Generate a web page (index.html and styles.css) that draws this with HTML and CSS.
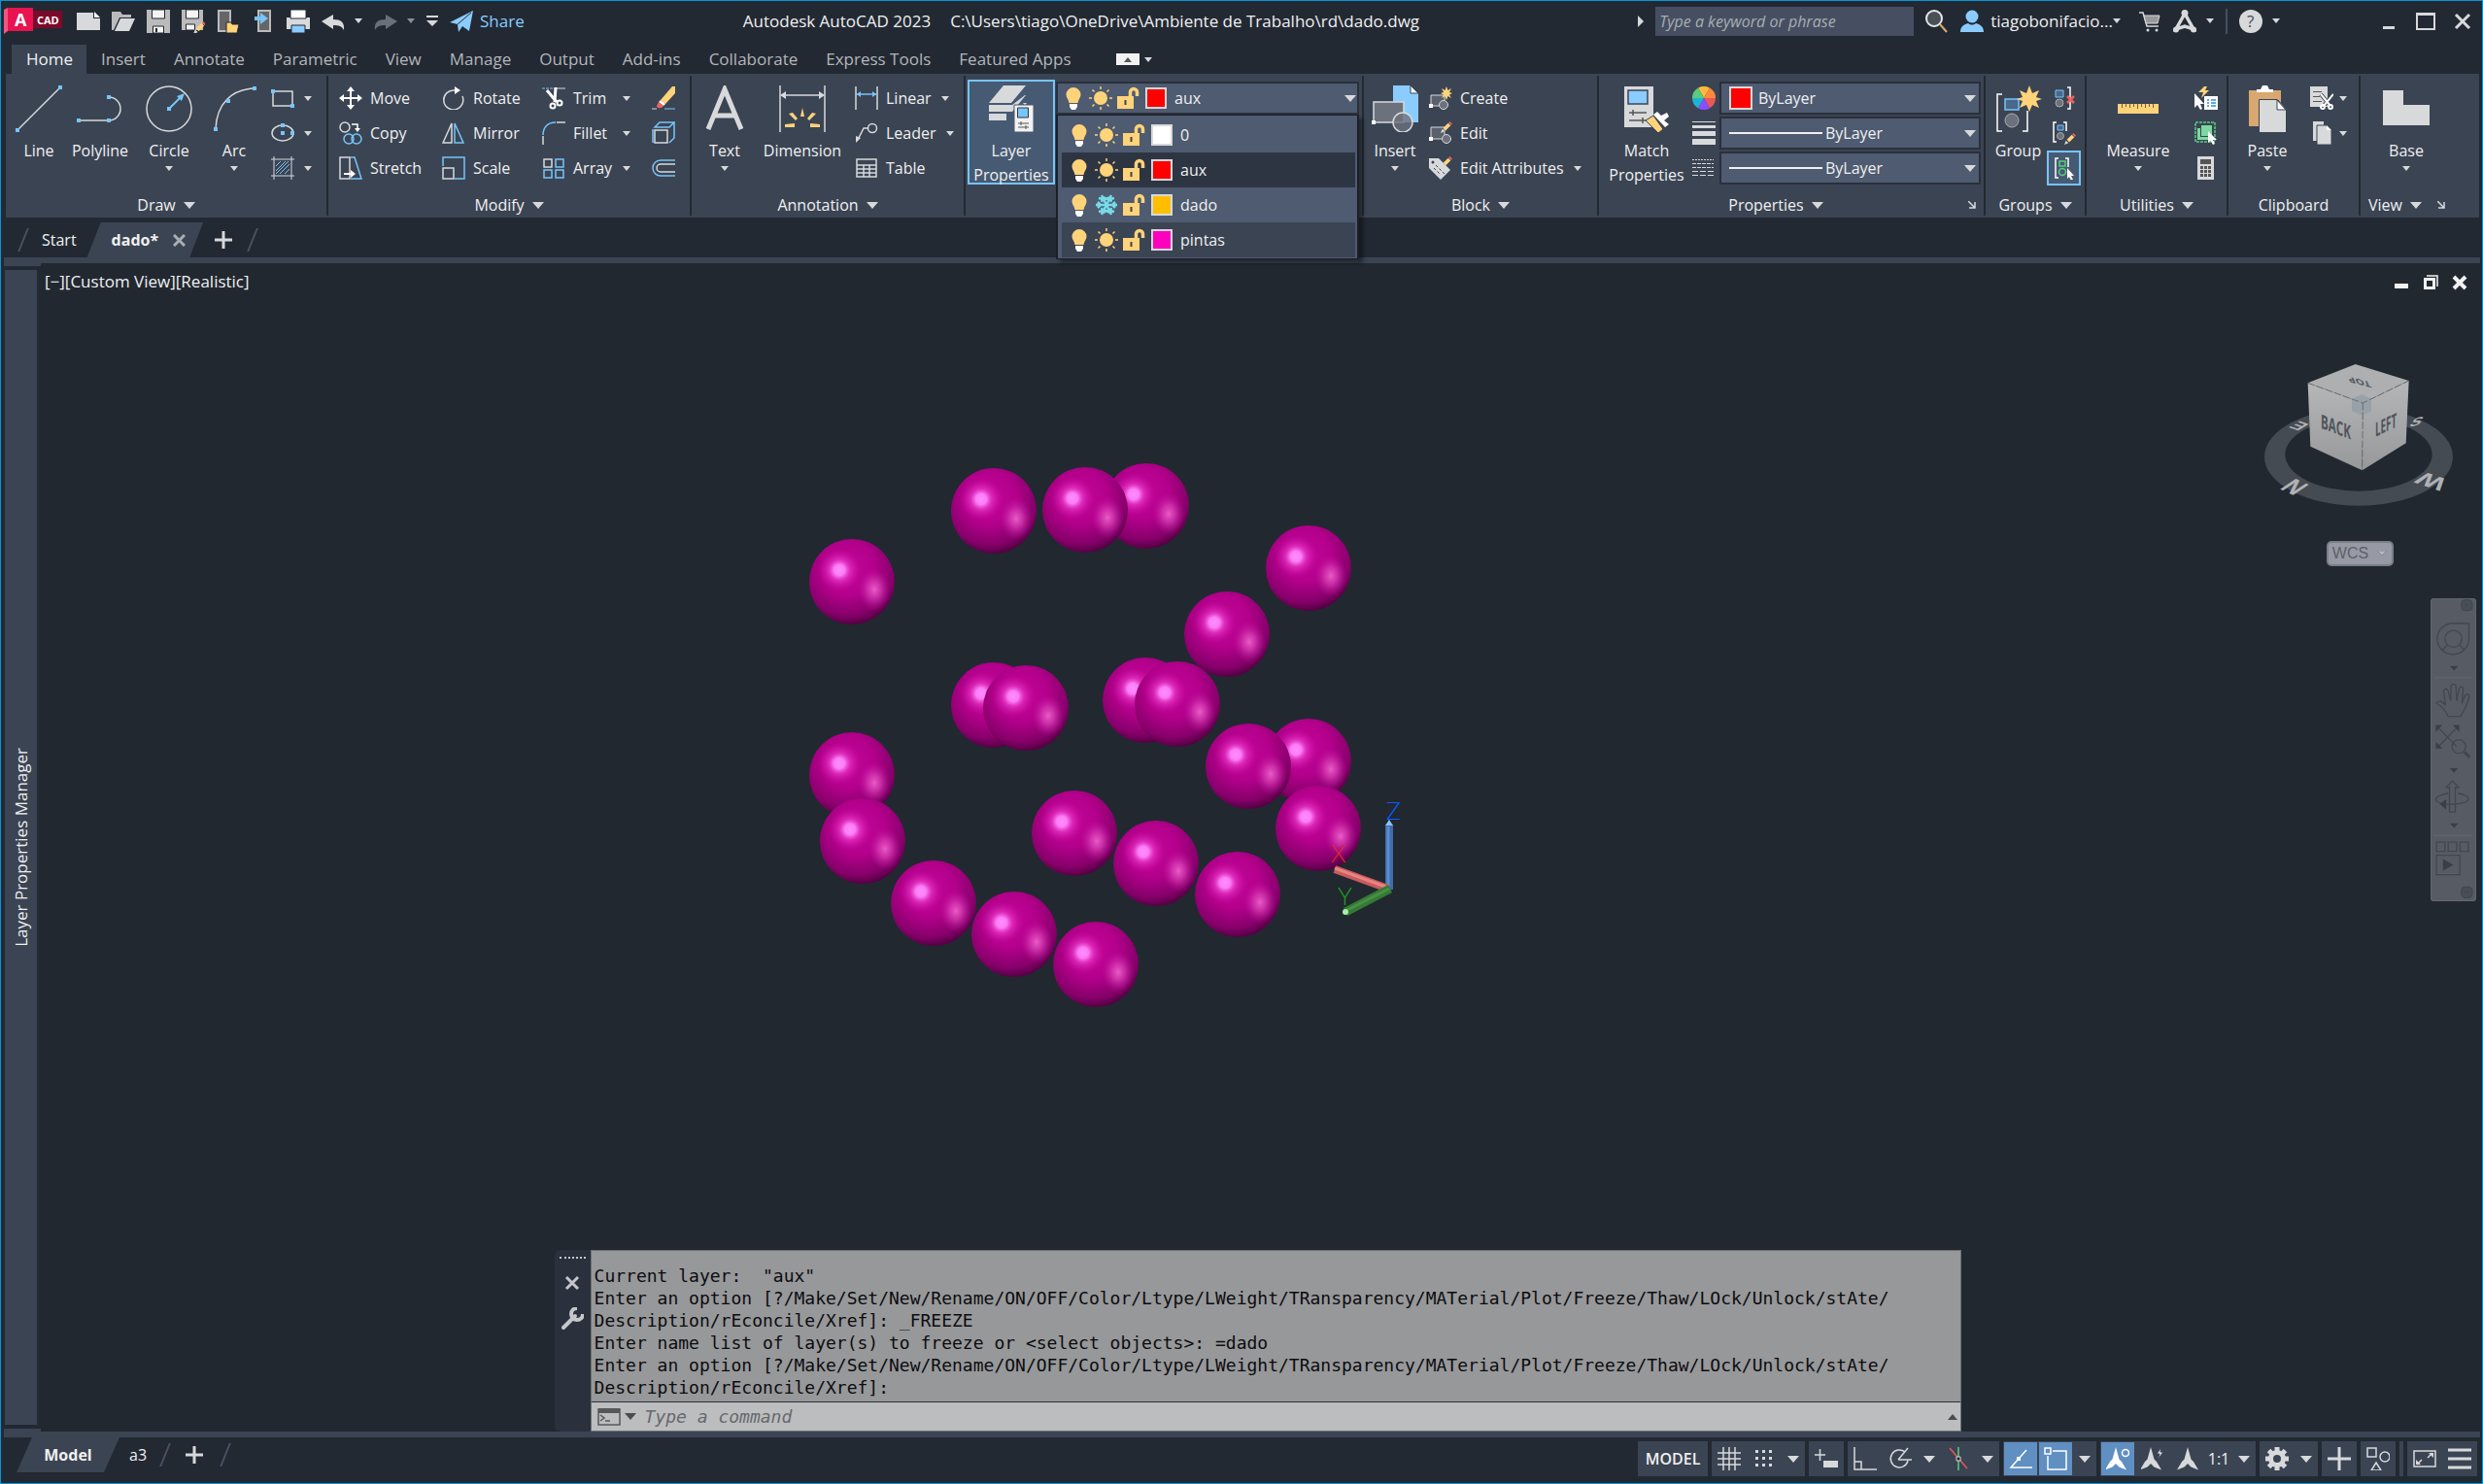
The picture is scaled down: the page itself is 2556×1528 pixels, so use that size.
FILE: index.html
```html
<!DOCTYPE html>
<html lang="en">
  <head>
    <meta charset="UTF-8" />
    <meta name="viewport" content="width=device-width, initial-scale=1.0" />
    <title>Autodesk AutoCAD 2023</title>
    <link rel="stylesheet" href="styles.css">
  </head>
  <body>
    <!-- Shared symbols -->
    <svg class="sprite" aria-hidden="true">
      <symbol id="bulb" viewBox="0 0 24 24">
        <path fill="#ffd37a" d="M12 1a7.500 7.500 0 0 1 7.500 7.500c0 3-2.500 5-3 8.500h-9c-.5-3.500-3-5.500-3-8.500A7.500 7.500 0 0 1 12 1z" />
        <path fill="#fff" d="M8 18h8v3l-2 3h-4l-2-3z" />
      </symbol>
      <symbol id="sun" viewBox="0 0 24 24">
        <circle cx="12" cy="12" r="7" fill="#ffd37a" />
        <path stroke="#ffd37a" stroke-width="1.500" d="M12 0v3M12 21v3M0 12h3M21 12h3M3.500 3.500l2 2M18.500 18.500l2 2M3.500 20.500l2-2M18.500 5.500l2-2" />
      </symbol>
      <symbol id="snow" viewBox="0 0 24 24">
        <path stroke="#76dbe8" stroke-width="2.500" fill="none" d="M12 12L7 2M12 12l5-10M12 12L7 22M12 12l5 10M1 12h22M4 5l4 1-1 3M20 5l-4 1 1 3M4 19l4-1-1-3M20 19l-4-1 1-3M3 9l3 3-3 3M21 9l-3 3 3 3M9 4l3 2 3-2M9 20l3-2 3 2" />
      </symbol>
      <symbol id="lock" viewBox="0 0 24 24">
        <path fill="#ffd37a" d="M1 10h17v13H1z" />
        <path fill="none" stroke="#ffd37a" stroke-width="3.500" d="M14.500 11V6a3.500 3.500 0 0 1 7 0v4" />
        <path stroke="#3b4453" stroke-width="2" d="M9.500 14v5" />
      </symbol>
      <symbol id="pencil" viewBox="0 0 14 14">
        <path fill="#ffd37a" d="M3 8l6-6 3 3-6 6z" />
        <path fill="#f06060" d="M9.500 1.500L11 0l3 3-1.500 1.500z" />
        <path fill="#d8d9db" d="M0 14l2-5 3 3z" />
      </symbol>
      <symbol id="compass" viewBox="0 0 24 24">
        <path fill="currentColor" d="M12 0l3.500 12.500L18 15l5 8.500-7.500-3L12 17l-3.500 3.500-7.500 3L6 15l2.500-2.500z" />
      </symbol>
      <radialGradient id="ball" cx="0.450" cy="0.350" r="0.680">
        <stop offset="0" stop-color="#c4069a" />
        <stop offset="0.450" stop-color="#b4008c" />
        <stop offset="0.800" stop-color="#86006a" />
        <stop offset="1" stop-color="#48003a" />
      </radialGradient>
      <radialGradient id="shine">
        <stop offset="0" stop-color="#ff8cff" />
        <stop offset="0.250" stop-color="#ff84fc" stop-opacity="0.950" />
        <stop offset="0.500" stop-color="#f040d0" stop-opacity="0.600" />
        <stop offset="1" stop-color="#d010a8" stop-opacity="0" />
      </radialGradient>
      <radialGradient id="glow">
        <stop offset="0" stop-color="#ea5cc8" />
        <stop offset="0.400" stop-color="#dc40b8" stop-opacity="0.700" />
        <stop offset="1" stop-color="#c010a0" stop-opacity="0" />
      </radialGradient>
      <symbol id="sphere" viewBox="-44 -44 88 88" overflow="visible">
        <circle r="44" fill="url(#ball)" />
        <ellipse cx="23" cy="8" rx="17" ry="22" fill="url(#glow)" />
        <circle cx="-13" cy="-12" r="22" fill="url(#shine)" />
      </symbol>
    </svg>

    <header class="titlebar">
      <div class="quick">
        <svg class="logo" viewBox="0 0 60 28">
          <path fill="#e81350" d="M4 0h26v24H4z" /><path fill="#f0567f" d="M0 2l4-2v24l-4 3z" />
          <path fill="#7c0a2a" d="M30 3h30v18H30z" />
          <text x="11" y="19" class="logo-a">A</text><text x="34" y="17" class="logo-cad">CAD</text>
        </svg>
        <svg class="ico" viewBox="0 0 24 24"><path fill="#d8d9db" d="M0 3h17v6h7v12H0z" /><path fill="#fff" d="M18 2l6 6h-6z" /></svg>
        <svg class="ico" viewBox="0 0 24 24"><path fill="#bbb" d="M0 2h9l2 3h9v3H8L2 21H0z" /><path fill="#d8d9db" d="M9 9h15l-6 13H3z" /></svg>
        <svg class="ico" viewBox="0 0 24 24"><path fill="#bbb" d="M0 0h24v24H0z" /><path fill="#f4f4f4" stroke="#222933" d="M5.500 0h13v9h-13zM6.500 17h11v7h-11z" /><path fill="#222933" d="M9 19h2v4H9z" /></svg>
        <svg class="ico" viewBox="0 0 24 24"><path fill="#bbb" d="M0 0h22v21H0z" /><path fill="#f4f4f4" stroke="#222933" d="M4.500 0h13v9h-13zM4.500 15h9v6h-9z" /><use href="#pencil" x="12" y="12" width="13" height="13" /></svg>
        <svg class="ico" viewBox="0 0 24 24"><path fill="#666" stroke="#bbb" stroke-width="2" d="M2 1h12v21H2z" /><path fill="#ffd37a" d="M10 13h5l1 2h7l-2 9H10z" stroke="#222933" /></svg>
        <svg class="ico" viewBox="0 0 24 24"><path fill="#666" stroke="#bbb" stroke-width="2" d="M7 1h12v21H7z" /><path fill="#76c5fb" d="M3 7h6V3l8 6-8 6v-4H3z" /></svg>
        <svg class="ico" viewBox="0 0 24 24"><path fill="#d8d9db" d="M0 8h24v12H0z" /><path fill="#fff" stroke="#222933" d="M4 0h16v9H4z" /><path fill="#8accff" stroke="#222933" d="M5 16h14v8H5z" /></svg>
        <div class="split">
          <svg class="ico" viewBox="0 0 24 24"><path fill="#d8d9db" d="M0 12l12-7v5c8 0 12 3 11 11-2-4-5-5-11-5v4z" /></svg>
          <i class="caret"></i>
        </div>
        <div class="split dim">
          <svg class="ico" viewBox="0 0 24 24"><path fill="#6a6f78" d="M24 12L12 5v5C4 10 0 13 1 21c2-4 5-5 11-5v4z" /></svg>
          <i class="caret"></i>
        </div>
        <svg width="12" height="12" viewBox="0 0 12 12"><path fill="#d8d9db" d="M0 0h12v2H0zM0 5h12l-6 6z" /></svg>
        <a class="share" href="#">
          <svg class="ico" viewBox="0 0 24 24"><path fill="#8accff" d="M0 13L24 1l-4 21-7-5-4 6-1-8z" /><path stroke="#222933" d="M8 15L22 3" /></svg>
          Share
        </a>
      </div>
      <div class="doc-title"><span>Autodesk AutoCAD 2023</span><span>C:\Users\tiago\OneDrive\Ambiente de Trabalho\rd\dado.dwg</span></div>
      <div class="account">
        <svg width="6" height="12" viewBox="0 0 6 12"><path fill="#d8d9db" d="M0 0l6 6-6 6z" /></svg>
        <input class="search" type="text" placeholder="Type a keyword or phrase" aria-label="Search" />
        <svg class="ico" viewBox="0 0 24 24"><circle cx="9" cy="9" r="8" fill="#4a5058" stroke="#e8e8e8" stroke-width="2" /><path stroke="#d8a870" stroke-width="2" d="M15 15l7 8" /></svg>
        <button class="user">
          <svg class="ico" viewBox="0 0 24 24"><circle cx="12" cy="7" r="6.500" fill="#8accff" /><path fill="#8accff" d="M0 23c0-6 4-8 8-9 3 2 5 2 8 0 4 1 8 3 8 9z" /></svg>
          <span>tiagobonifacio...</span><i class="caret"></i>
        </button>
        <svg class="ico" viewBox="0 0 24 24"><path fill="none" stroke="#d8d9db" stroke-width="1.500" d="M1 3h4l4 14h12" /><path fill="#999" stroke="#d8d9db" d="M6 6h16l-2 8H8z" /><circle cx="10" cy="21" r="1.500" fill="#d8d9db" /><circle cx="19" cy="21" r="1.500" fill="#d8d9db" /></svg>
        <div class="split">
          <svg class="ico" viewBox="0 0 24 24"><path fill="none" stroke="#d8d9db" stroke-width="3.500" d="M12 4L3 20l9-3 9 3z" /><circle cx="12" cy="3.500" r="3.500" fill="#d8d9db" /><circle cx="3" cy="20.500" r="3" fill="#d8d9db" /><circle cx="21" cy="20.500" r="3" fill="#d8d9db" /></svg>
          <i class="caret"></i>
        </div>
        <i class="bar"></i>
        <div class="split">
          <svg class="ico" viewBox="0 0 24 24"><circle cx="12" cy="12" r="12" fill="#d8d9db" /><text x="8" y="18" class="help">?</text></svg>
          <i class="caret"></i>
        </div>
        <div class="win">
          <button aria-label="Minimize"><svg viewBox="0 0 20 20"><path stroke="#d8d9db" stroke-width="3" d="M4 16.500h12" /></svg></button>
          <button aria-label="Maximize"><svg viewBox="0 0 20 20"><path fill="none" stroke="#d8d9db" stroke-width="2" d="M1 2h18v16H1z" /><path stroke="#d8d9db" stroke-width="3" d="M1 2.500h18" /></svg></button>
          <button aria-label="Close"><svg viewBox="0 0 20 20"><path stroke="#d8d9db" stroke-width="3" d="M3 3l14 14M17 3L3 17" /></svg></button>
        </div>
      </div>
    </header>

    <nav class="tabs">
      <a class="active" href="#">Home</a>
      <a href="#">Insert</a>
      <a href="#">Annotate</a>
      <a href="#">Parametric</a>
      <a href="#">View</a>
      <a href="#">Manage</a>
      <a href="#">Output</a>
      <a href="#">Add-ins</a>
      <a href="#">Collaborate</a>
      <a href="#">Express Tools</a>
      <a href="#">Featured Apps</a>
      <button class="collapse" aria-label="Minimize ribbon"><svg viewBox="0 0 24 12"><path fill="#f2f2f2" d="M0 0h24v12H0z" /><path fill="#555" d="M12 4l4 5H8z" /></svg></button>
      <i class="caret"></i>
    </nav>

    <section class="ribbon">
      <div class="panel draw">
        <div class="tools">
          <button class="big">
            <svg viewBox="0 0 48 48"><path stroke="#d8d9db" stroke-width="1.500" d="M2 46L46 2" /><path fill="#76c5fb" d="M0 44h4v4H0zM44 0h4v4h-4z" /></svg>
            <span>Line</span>
          </button>
          <button class="big">
            <svg viewBox="0 0 48 48"><path fill="none" stroke="#d8d9db" stroke-width="1.500" d="M2 36h31a12 12 0 0 0 0-24" /><path fill="#76c5fb" d="M0 34h4v4H0zM31 34h4v4h-4zM31 10h4v4h-4z" /></svg>
            <span>Polyline</span>
          </button>
          <button class="big">
            <svg viewBox="0 0 48 48"><circle cx="24" cy="24" r="23" fill="none" stroke="#d8d9db" stroke-width="1.500" /><path stroke="#76c5fb" stroke-width="2" d="M24 24l13-13" /><path fill="#76c5fb" d="M22 22h4v4h-4zM40 8l-3 8-5-5z" /></svg>
            <span>Circle</span><i class="caret"></i>
          </button>
          <button class="big">
            <svg viewBox="0 0 48 48"><path fill="none" stroke="#d8d9db" stroke-width="1.500" d="M5 45C6 18 22 4 45 3" /><path fill="#76c5fb" d="M3 43h4v4H3zM16 14h4v4h-4zM43 1h4v4h-4z" /></svg>
            <span>Arc</span><i class="caret"></i>
          </button>
          <div class="rows">
            <button class="row"><svg viewBox="0 0 24 24"><path fill="none" stroke="#d8d9db" stroke-width="1.500" d="M2 5h20v15H2z" /><path fill="#76c5fb" d="M0 3h4v4H0zM20 18h4v4h-4z" /></svg><i class="caret"></i></button>
            <button class="row"><svg viewBox="0 0 24 24"><ellipse cx="12" cy="12" rx="11" ry="8" fill="none" stroke="#d8d9db" stroke-width="1.500" /><path fill="#76c5fb" d="M10 10h4v4h-4zM10 2h4v4h-4zM20 10h4v4h-4z" /></svg><i class="caret"></i></button>
            <button class="row"><svg viewBox="0 0 24 24"><path fill="none" stroke="#d8d9db" d="M0 3h24M0 20h24M3 0v24M21 0v24" /><path stroke="#76c5fb" d="M5 10l5-5M5 15L15 5M5 18L18 5M9 18L19 8M14 18l5-5" /></svg><i class="caret"></i></button>
          </div>
        </div>
        <h2>Draw <i class="drop"></i></h2>
      </div>

      <div class="panel modify">
        <div class="tools">
          <div class="rows">
            <button class="row"><svg viewBox="0 0 24 24"><path stroke="#fff" stroke-width="2" d="M12 3v18M3 12h18" /><path fill="#fff" d="M12 0l4 5H8zM12 24l-4-5h8zM0 12l5-4v8zM24 12l-5 4V8z" /></svg><span>Move</span></button>
            <button class="row"><svg viewBox="0 0 24 24"><g fill="none" stroke-width="1.500"><circle cx="6" cy="6" r="5" stroke="#d8d9db" /><circle cx="10" cy="18" r="5" stroke="#76c5fb" /><circle cx="18" cy="18" r="5" stroke="#76c5fb" /><path stroke="#fff" d="M13 3h6v5" /></g><path fill="#fff" d="M16 7h6l-3 4z" /></svg><span>Copy</span></button>
            <button class="row"><svg viewBox="0 0 24 24"><path fill="none" stroke="#d8d9db" stroke-width="1.500" d="M1 1h10v22H1z" /><path fill="none" stroke="#76c5fb" stroke-width="1.500" d="M12 1h4l7 22H12" /><path stroke="#fff" stroke-width="2" d="M5 18h8" /><path fill="#fff" d="M12 14l5 4-5 4z" /></svg><span>Stretch</span></button>
          </div>
          <div class="rows">
            <button class="row"><svg viewBox="0 0 24 24"><path fill="none" stroke="#d8d9db" stroke-width="1.500" d="M13 4a10 10 0 1 0 8 6" /><path fill="#fff" d="M13 0l6 4-6 4z" /></svg><span>Rotate</span></button>
            <button class="row"><svg viewBox="0 0 24 24"><path fill="none" stroke="#d8d9db" stroke-width="1.500" d="M10 2v20H1z" /><path fill="none" stroke="#76c5fb" stroke-width="1.500" d="M13 2v20h9z" /></svg><span>Mirror</span></button>
            <button class="row"><svg viewBox="0 0 24 24"><path fill="none" stroke="#76c5fb" stroke-width="1.500" d="M1 10V1h22v22H13" /><path fill="none" stroke="#d8d9db" stroke-width="1.500" d="M1 12h11v11H1z" /></svg><span>Scale</span></button>
          </div>
          <div class="rows spread">
            <button class="row"><svg viewBox="0 0 24 24"><path stroke="#76c5fb" stroke-dasharray="3 1" d="M0 2h13" /><path stroke="#d8d9db" d="M15 2h9" /><path stroke="#fff" stroke-width="3" d="M5 4l10 12M14 1l-1 15" /><g fill="none" stroke="#fff" stroke-width="2"><circle cx="11" cy="20" r="2.500" /><circle cx="18" cy="17" r="2.500" /></g></svg><span>Trim</span><i class="caret"></i></button>
            <button class="row"><svg viewBox="0 0 24 24"><path fill="none" stroke="#76c5fb" stroke-width="1.500" d="M1 14C1 6 6 1 14 1" /><path stroke="#d8d9db" stroke-width="1.500" d="M15 1h9M1 15v9" /></svg><span>Fillet</span><i class="caret"></i></button>
            <button class="row"><svg viewBox="0 0 24 24"><path fill="none" stroke="#d8d9db" stroke-width="1.500" d="M2 3h8v8H2z" /><path fill="none" stroke="#76c5fb" stroke-width="1.500" d="M14 3h8v8h-8zM2 14h8v8H2zM14 14h8v8h-8z" /></svg><span>Array</span><i class="caret"></i></button>
          </div>
          <div class="rows">
            <button class="row" aria-label="Erase"><svg viewBox="0 0 24 24"><path fill="#ffd37a" d="M24 0v7L14 18l-5-4L21 0z" /><path fill="#fff" d="M9 14l5 4-2 2-5-4z" /><path fill="#f06060" d="M7 16l5 4c-2 3-7 3-7 0z" /><path stroke="#76c5fb" d="M13 23h11" /><path stroke="#d8d9db" d="M0 23h5" /></svg></button>
            <button class="row" aria-label="Explode"><svg viewBox="0 0 24 24"><path fill="none" stroke="#76c5fb" stroke-width="1.500" d="M1 8v14M3 6l5-5h15l-5 5zM18 22l5-5V1" /><path fill="none" stroke="#d8d9db" stroke-width="1.500" d="M3 9h13v13H3z" /></svg></button>
            <button class="row" aria-label="Offset"><svg viewBox="0 0 24 24"><path fill="none" stroke="#76c5fb" stroke-width="1.500" d="M24 4H9a7.500 7.500 0 0 0 0 16h15" /><path fill="none" stroke="#d8d9db" stroke-width="1.500" d="M24 8H9a4 4 0 0 0 0 8h15" /></svg></button>
          </div>
        </div>
        <h2>Modify <i class="drop"></i></h2>
      </div>

      <div class="panel annotation">
        <div class="tools">
          <button class="big">
            <svg viewBox="0 0 48 48"><path fill="none" stroke="#d8d9db" stroke-width="5" d="M7 45L24 4l17 41M13 31h22" /></svg>
            <span>Text</span><i class="caret"></i>
          </button>
          <button class="big">
            <svg viewBox="0 0 48 48"><path stroke="#d8d9db" stroke-width="1.500" d="M1 0v48M47 0v48M2 10h44" /><path fill="#d8d9db" d="M1 10l6-4v8zM47 10l-6-4v8z" /><path fill="#ffd37a" d="M22 32l2-9 2 9zM17 36l-7-7 4-1 5 6zM31 36l7-7-4-1-5 6zM6 40l10-1v4H6zM42 40l-10-1v4h10z" /></svg>
            <span>Dimension</span>
          </button>
          <div class="rows">
            <button class="row"><svg viewBox="0 0 24 24"><path stroke="#d8d9db" stroke-width="1.500" d="M1 0v24M23 0v24" /><path stroke="#76c5fb" stroke-width="1.500" d="M2 8h20" /><path fill="#76c5fb" d="M2 8l4-3v6zM22 8l-4-3v6z" /></svg><span>Linear</span><i class="caret"></i></button>
            <button class="row"><svg viewBox="0 0 24 24"><circle cx="18" cy="7" r="4.500" fill="none" stroke="#d8d9db" stroke-width="1.500" /><path fill="none" stroke="#d8d9db" stroke-width="1.500" d="M13 7H9L3 19" /><path fill="#d8d9db" d="M1 22V15l5 2z" /></svg><span>Leader</span><i class="caret"></i></button>
            <button class="row"><svg viewBox="0 0 24 24"><path fill="none" stroke="#d8d9db" stroke-width="1.500" d="M2 3h20v18H2zM2 9h20M2 13h20M2 17h20M9 9v12M15 9v12" /></svg><span>Table</span></button>
          </div>
        </div>
        <h2>Annotation <i class="drop"></i></h2>
      </div>

      <div class="panel layers">
        <div class="tools">
          <button class="big on">
            <svg viewBox="0 0 48 48"><g fill="#d8d9db"><path d="M16 0h23L24 18H1z" /><path d="M6 20H1l0 7h24L39 10l-1 0-13 10zM6 29H1v7h18v-7zM36 18h4l-2 3z" /></g><path fill="#f2f2f2" stroke="#465a73" d="M27 20h20v28H27z" /><path fill="#76c5fb" stroke="#333" d="M30.500 23h11v10h-11z" /><path stroke="#555" d="M31 39h11M31 43h11M34 37v4M39 41v4" /></svg>
            <span>Layer<br>Properties</span>
          </button>
          <div class="layer-box">
            <div class="combo">
              <svg class="li"><use href="#bulb" /></svg>
              <svg class="li"><use href="#sun" /></svg>
              <svg class="li"><use href="#lock" /></svg>
              <i class="swatch red"></i>
              <select aria-label="Layer"><option>aux</option></select>
              <i class="drop"></i>
            </div>
            <ul class="layer-list">
              <li><svg class="li"><use href="#bulb" /></svg><svg class="li"><use href="#sun" /></svg><svg class="li"><use href="#lock" /></svg><i class="swatch white"></i><span>0</span></li>
              <li class="current"><svg class="li"><use href="#bulb" /></svg><svg class="li"><use href="#sun" /></svg><svg class="li"><use href="#lock" /></svg><i class="swatch red"></i><span>aux</span></li>
              <li><svg class="li"><use href="#bulb" /></svg><svg class="li"><use href="#snow" /></svg><svg class="li"><use href="#lock" /></svg><i class="swatch amber"></i><span>dado</span></li>
              <li class="plain"><svg class="li"><use href="#bulb" /></svg><svg class="li"><use href="#sun" /></svg><svg class="li"><use href="#lock" /></svg><i class="swatch pink"></i><span>pintas</span></li>
            </ul>
          </div>
        </div>
      </div>

      <div class="panel block">
        <div class="tools">
          <button class="big">
            <svg viewBox="0 0 48 48"><path fill="#8accff" d="M22 0h18l8 8v30H22z" /><path fill="#fff" stroke="#3b4453" d="M40 0v8h8z" /><path fill="#6b727d" stroke="#d8d9db" stroke-width="1.500" d="M2 17h31v21H2z" /><circle cx="32" cy="38" r="10" fill="#6b727d" fill-opacity=".8" stroke="#d8d9db" stroke-width="1.500" /><path fill="#fff" d="M0 36h4v4H0z" /></svg>
            <span>Insert</span><i class="caret"></i>
          </button>
          <div class="rows">
            <button class="row"><svg viewBox="0 0 24 24"><path fill="#5a616d" stroke="#d8d9db" d="M2 9h14v11H2z" /><circle cx="15" cy="19" r="4.500" fill="#6b727d" stroke="#d8d9db" /><path fill="#fff" d="M0 18h4v4H0z" /><path fill="#ffd37a" d="M18 0l1.500 4L23 2l-2 4 3 1-3 1.500L23 12l-3.500-2L18 14l-1.500-4-3.500 2 2-3.500L12 7l3-1-2-4 3.500 2z" /></svg><span>Create</span></button>
            <button class="row"><svg viewBox="0 0 24 24"><path fill="#5a616d" stroke="#d8d9db" d="M2 6h14v12H2z" /><circle cx="18" cy="18" r="4.500" fill="#6b727d" stroke="#d8d9db" /><path fill="#fff" d="M0 16h4v4H0z" /><use href="#pencil" x="12" width="12" height="12" /></svg><span>Edit</span></button>
            <button class="row"><svg viewBox="0 0 24 24"><path fill="#d8d9db" d="M0 2h10l12 12-10 10L0 12z" /><circle cx="4" cy="6" r="1.500" fill="#3b4453" /><path stroke="#3b4453" stroke-dasharray="3 2" d="M7 9l9 9M5 12l7 7" /><use href="#pencil" x="12" width="12" height="12" /></svg><span>Edit Attributes</span><i class="caret"></i></button>
          </div>
        </div>
        <h2>Block <i class="drop"></i></h2>
      </div>

      <div class="panel properties">
        <div class="tools">
          <button class="big">
            <svg viewBox="0 0 48 48"><path fill="#d8d9db" d="M1 1h30v42H1z" /><path fill="#8accff" stroke="#3b4453" stroke-width="1.500" d="M5 5h20v14H5z" /><path stroke="#555" stroke-width="1.500" d="M6 28h18M6 36h18M10 25v6M20 33v6" /><path fill="#ffd37a" stroke="#3b4453" d="M23 36l8-5 10 14-5 4z" /><path fill="#fff" d="M31 30l4-3 4 4 6-3 2 4-5 4 5 4-4 3z" /></svg>
            <span>Match<br>Properties</span>
          </button>
          <div class="props">
            <svg class="pi" viewBox="0 0 24 24"><path fill="#ffb93c" d="M12 12L6 1.600a12 12 0 0 1 12 0z" /><path fill="#ff8a3d" d="M12 12l6-10.400A12 12 0 0 1 24 12z" /><path fill="#e85858" d="M12 12h12a12 12 0 0 1-6 10.400z" /><path fill="#8a4dff" d="M12 12l6 10.400a12 12 0 0 1-12 0z" /><path fill="#1eb4d0" d="M12 12L6 22.400A12 12 0 0 1 0 12z" /><path fill="#58cc80" d="M12 12H0A12 12 0 0 1 6 1.600z" /></svg>
            <div class="combo"><i class="swatch wide red"></i><select aria-label="Object color"><option>ByLayer</option></select><i class="drop"></i></div>
            <svg class="pi" viewBox="0 0 24 24"><path fill="#d8d9db" d="M0 0h24v1H0zM0 4h24v3H0zM0 10h24v5H0zM0 18h24v6H0z" /></svg>
            <div class="combo"><i class="stroke"></i><select aria-label="Lineweight"><option>ByLayer</option></select><i class="drop"></i></div>
            <svg class="pi" viewBox="0 0 24 24"><path stroke="#d8d9db" stroke-dasharray="2 1" d="M0 3.500h22" /><path stroke="#d8d9db" stroke-dasharray="4 1" d="M0 7.500h22M0 11.500h22" /><path stroke="#d8d9db" stroke-dasharray="6 2" d="M0 15.500h24M0 19.500h24" /></svg>
            <div class="combo"><i class="stroke"></i><select aria-label="Linetype"><option>ByLayer</option></select><i class="drop"></i></div>
          </div>
        </div>
        <h2><span>Properties <i class="drop"></i></span><svg class="launch" viewBox="0 0 8 8"><path fill="none" stroke="#d8d9db" stroke-width="1.500" d="M0 0l7 7M7 1v6H1" /></svg></h2>
      </div>

      <div class="panel groups">
        <div class="tools">
          <button class="big">
            <svg viewBox="0 0 48 48"><path fill="none" stroke="#fff" stroke-width="1.500" d="M7 9H2v38h5M28 47h5V26" /><path fill="#4b678a" stroke="#76c5fb" stroke-width="1.500" d="M10 14h14v11H10z" /><circle cx="17" cy="36" r="7" fill="#6b727d" stroke="#aaa" /><path fill="#ffd37a" d="M35 0l3 8 7-3-3 7 6 2-6 2 3 7-7-3-3 7-3-7-7 3 3-7-6-2 6-2-3-7 7 3z" /></svg>
            <span>Group</span>
          </button>
          <div class="rows">
            <button class="row" aria-label="Ungroup"><svg viewBox="0 0 24 24"><path fill="none" stroke="#fff" stroke-width="1.500" d="M15 1h3v22h-3" /><path fill="#4b678a" stroke="#76c5fb" d="M3 4h8v7H3z" /><circle cx="7" cy="17" r="4" fill="#6b727d" stroke="#aaa" /><path stroke="#f06060" stroke-width="2.500" d="M15 10l7 7M22 10l-7 7" /></svg></button>
            <button class="row" aria-label="Group edit"><svg viewBox="0 0 24 24"><path fill="none" stroke="#fff" stroke-width="1.500" d="M4 1H1v20h3M11 1h3v9" /><path fill="#4b678a" stroke="#76c5fb" d="M5 4h6v5H5z" /><circle cx="8" cy="15" r="3.500" fill="#6b727d" stroke="#aaa" /><use href="#pencil" x="12" y="12" width="12" height="12" /></svg></button>
            <button class="row on" aria-label="Group selection"><svg viewBox="0 0 24 24"><path fill="none" stroke="#fff" stroke-width="1.500" d="M6 2H3v20h3M13 2h3v9" /><path fill="none" stroke="#58cc80" stroke-width="1.500" d="M7 5h6v5H7z" /><circle cx="10" cy="16" r="3.500" fill="none" stroke="#58cc80" stroke-width="1.500" /><path fill="#fff" d="M15 12v11l2-2 2 4 2-1-2-4h3z" /></svg></button>
          </div>
        </div>
        <h2>Groups <i class="drop"></i></h2>
      </div>

      <div class="panel utilities">
        <div class="tools">
          <button class="big">
            <svg viewBox="0 0 48 48"><path fill="#ffd37a" d="M3 19h42v10H3z" /><path stroke="#7a6030" d="M7.500 19v4M11.500 19v3M15.500 19v4M19.500 19v3M23.500 19v5M27.500 19v3M31.500 19v4M35.500 19v3M39.500 19v4" /></svg>
            <span>Measure</span><i class="caret"></i>
          </button>
          <div class="rows">
            <button class="row" aria-label="Quick select"><svg viewBox="0 0 24 24"><path fill="#ffd37a" d="M10 0h3l-2 4h4l-8 8 2-6H4z" /><path fill="#fff" d="M0 7v15l3-3 3 5 2-1-2-5h4zM10 10h14v14H10z" /><path stroke="#2a8fe0" stroke-width="1.500" d="M13 14h2M13 17h2M13 20h2M17 14h5M17 17h5M17 20h5" /></svg></button>
            <button class="row" aria-label="Select all"><svg viewBox="0 0 24 24"><path fill="none" stroke="#58cc80" stroke-width="1.500" stroke-dasharray="3 1" d="M1 1h20v20H1z" /><path fill="#7dd8a0" d="M7 4h11v11H7zM3 7h3v9h10v3H3z" /><path fill="#fff" d="M14 10v12l2.500-2 2.500 4 2-1-2-4h4z" /></svg></button>
            <button class="row" aria-label="Quick calculator"><svg viewBox="0 0 24 24"><path fill="#d8d9db" d="M3 0h17v24H3z" /><path fill="#555" d="M6 3h11v5H6zM6 10h3v3H6zM10 10h3v3h-3zM14 10h3v3h-3zM6 14h3v3H6zM10 14h3v3h-3zM14 14h3v3h-3zM6 18h3v3H6zM10 18h3v3h-3zM14 18h3v3h-3z" /></svg></button>
          </div>
        </div>
        <h2>Utilities <i class="drop"></i></h2>
      </div>

      <div class="panel clipboard">
        <div class="tools">
          <button class="big">
            <svg viewBox="0 0 48 48"><path fill="#d8a870" d="M5 5h33v37H5z" /><path fill="#fff" d="M13 7V4h4l2-4h5l2 4h4v3z" /><path fill="#d8d9db" stroke="#3b4453" d="M15.500 14.500h19l9 10v24h-28z" /><path fill="#fff" stroke="#3b4453" d="M34 15v10h9z" /></svg>
            <span>Paste</span><i class="caret"></i>
          </button>
          <div class="rows">
            <button class="row" aria-label="Cut"><svg viewBox="0 0 24 24"><path fill="#d8d9db" d="M0 0h18v21H0z" /><path stroke="#555" d="M3 5.500h9M3 10.500h7M3 15.500h9" /><path stroke="#3b4453" stroke-width="4" d="M11 8l10 12M24 8L14 20" /><path stroke="#fff" stroke-width="2" d="M11 8l10 12M24 8L14 20" /><g fill="none" stroke="#fff" stroke-width="2"><circle cx="13" cy="21" r="2" /><circle cx="21" cy="21" r="2" /></g></svg><i class="caret"></i></button>
            <button class="row" aria-label="Copy clip"><svg viewBox="0 0 24 24"><path fill="#d8d9db" d="M3 0h11v20H3z" /><path fill="#d8d9db" stroke="#3b4453" d="M7 4h10l5 5v15H7z" /><path fill="#fff" d="M17 4l5 5h-5z" /></svg><i class="caret"></i></button>
          </div>
        </div>
        <h2>Clipboard</h2>
      </div>

      <div class="panel view">
        <div class="tools">
          <button class="big">
            <svg viewBox="0 0 48 48"><path fill="#d8d9db" d="M0 5h21v15h27v21H0z" /></svg>
            <span>Base</span><i class="caret"></i>
          </button>
        </div>
        <h2>View <i class="drop"></i><svg class="launch" viewBox="0 0 8 8"><path fill="none" stroke="#d8d9db" stroke-width="1.500" d="M0 0l7 7M7 1v6H1" /></svg></h2>
      </div>
    </section>

    <nav class="files">
      <i class="slash"></i>
      <a href="#" class="start">Start</a>
      <a href="#" class="file active">dado* <svg width="13" height="13" viewBox="0 0 13 13"><path stroke="#a9adb4" stroke-width="3" d="M1 1l11 11M12 1L1 12" /></svg></a>
      <button class="plus" aria-label="New drawing"><svg viewBox="0 0 18 18"><path stroke="#d8d9db" stroke-width="3" d="M9 0v18M0 9h18" /></svg></button>
      <i class="slash"></i>
    </nav>

    <main class="work">
      <aside class="dock"><div class="palette"><span>Layer Properties Manager</span></div></aside>
      <section class="viewport">
        <svg class="scene">
          <!-- scene origin is near the top left corner of the spheres' bounding box -->
          <g transform="translate(794 201)">
            <use href="#sphere" x="300" y="5" width="88" height="88" />
            <use href="#sphere" x="143" y="10" width="88" height="88" />
            <use href="#sphere" x="237" y="9" width="88" height="88" />
            <use href="#sphere" x="-3" y="83" width="88" height="88" />
            <use href="#sphere" x="467" y="69" width="88" height="88" />
            <use href="#sphere" x="383" y="137" width="88" height="88" />
            <use href="#sphere" x="143" y="210" width="88" height="88" />
            <use href="#sphere" x="176" y="213" width="88" height="88" />
            <use href="#sphere" x="299" y="205" width="88" height="88" />
            <use href="#sphere" x="332" y="209" width="88" height="88" />
            <use href="#sphere" x="467" y="268" width="88" height="88" />
            <use href="#sphere" x="405" y="273" width="88" height="88" />
            <use href="#sphere" x="477" y="337" width="88" height="88" />
            <use href="#sphere" x="-3" y="282" width="88" height="88" />
            <use href="#sphere" x="8" y="350" width="88" height="88" />
            <use href="#sphere" x="226" y="342" width="88" height="88" />
            <use href="#sphere" x="310" y="373" width="88" height="88" />
            <use href="#sphere" x="394" y="405" width="88" height="88" />
            <use href="#sphere" x="81" y="414" width="88" height="88" />
            <use href="#sphere" x="164" y="446" width="88" height="88" />
            <use href="#sphere" x="248" y="477" width="88" height="88" />
            <!-- UCS axes -->
            <g fill="none" stroke-width="8">
              <path stroke="#416bab" d="M594 377v67" /><path stroke="#5c8ccb" stroke-width="3" d="M593 379v62" />
              <path stroke="#c85b5b" d="M538 423l55 20" /><path stroke="#e88383" stroke-width="3" d="M538 422l55 20" />
              <path stroke="#347a34" stroke-width="9" d="M595 443l-46 24" /><path stroke="#489048" stroke-width="3" d="M594 443l-45 23" />
            </g>
            <circle cx="549" cy="467" r="3" fill="#a8f0a8" /><path fill="#8cc4ff" d="M590 378l4-6 4 6z" />
            <text x="591" y="372" class="axis" fill="#0a5cff">Z</text>
            <text x="534" y="416" class="axis" fill="#e02828">X</text>
            <text x="541" y="460" class="axis" fill="#20a020">Y</text>
          </g>
        </svg>

        <div class="vp-head">
          <span>[−][Custom View][Realistic]</span>
          <div class="vp-win">
            <button aria-label="Minimize"><svg viewBox="0 0 16 16"><path fill="#f2f2f2" d="M1 9h14v5H1z" /></svg></button>
            <button aria-label="Restore"><svg viewBox="0 0 16 16"><path fill="none" stroke="#f2f2f2" stroke-width="1.500" d="M4 1h11v11" /><path fill="none" stroke="#f2f2f2" stroke-width="3" d="M2.500 4.500h9v9h-9z" /></svg></button>
            <button aria-label="Close"><svg viewBox="0 0 16 16"><path stroke="#f2f2f2" stroke-width="4" d="M2 2l12 12M14 2L2 14" /></svg></button>
          </div>
        </div>

        <div class="nav-tools">
          <svg class="cube" viewBox="60 40 600 450">
            <defs>
              <linearGradient id="face" x2="0" y2="1"><stop offset="0" stop-color="#b4b6b8" /><stop offset="1" stop-color="#97989a" /></linearGradient>
            </defs>
            <path fill="#454b53" fill-rule="evenodd" d="M66 332a291 151 0 1 0 582 0a291 151 0 1 0-582 0zM130 325a227 113 0 1 0 454 0a227 113 0 1 0-454 0z" />
            <g class="dir">
              <text transform="matrix(-1 -.35 -.9 .55 174 252)">E</text>
              <text transform="matrix(1 -.2 -.5 .75 510 240)">S</text>
            </g>
            <path fill="#adafb1" d="M347 46l165 51-142 69-170-62z" />
            <path fill="url(#face)" d="M200 104l170 62-2 208-160-74z" />
            <path fill="url(#face)" d="M512 97l-142 69-2 208 135-84z" />
            <path fill="#98a0a8" d="M336 153l31-13 29 13v38l-28 13-32-13z" />
            <path fill="none" stroke="#50555b" stroke-width="2" stroke-dasharray="22 7" d="M200 104l170 62 142-69M370 166l-2 208" />
            <g class="face">
              <text transform="matrix(.58 .22 0 1 240 243)">BACK</text>
              <text transform="matrix(.49 -.24 0 1 408 271)">LEFT</text>
              <text class="top" transform="matrix(-.95 -.25 -.3 -.7 390 101)">TOP</text>
            </g>
            <g class="dir">
              <text transform="matrix(1.300 .6 -1.350 .9 110 430)">N</text>
              <text transform="matrix(-1.650 -.55 .8 -.95 636 404)">W</text>
            </g>
          </svg>
          <button class="wcs">WCS <svg width="12" height="6" viewBox="0 0 12 6"><path fill="#b5b7c2" stroke="#84868f" d="M1 0h10L6 5z" /></svg></button>
          <svg class="navbar" viewBox="38 47 140 934">
            <rect x="39" y="48" width="138" height="932" rx="8" fill="#575c64" stroke="#777b80" stroke-width="2" />
            <g fill="none" stroke="#42474f" stroke-width="4">
              <rect x="133" y="52" width="33" height="33" rx="12" fill="#4a4f57" /><path stroke-width="2" d="M142 61l15 15M157 61l-15 15" />
              <path d="M156 124v48a49 48 0 1 1-49-48z" /><circle cx="108" cy="172" r="26" /><path d="M88 191l-14 17M128 191l14 17" />
              <path d="M92 411c-10-22-20-32-36-40 4-12 18-8 28 6l-6-44c2-10 12-8 14 0l8 30 0-44c2-10 14-10 16 0l2 44 8-38c4-8 14-6 12 4l-4 42 10-24c6-8 14-4 12 6-6 24-14 40-26 58z" />
              <path d="M60 444l58 60M120 444l-58 60" /><circle cx="125" cy="504" r="21" /><path stroke-width="10" d="M142 521l16 16" />
              <path d="M96 706v-76H86l19-20 19 20h-10v76zM92 648c-50 10-50 28-8 34M122 648c46 8 44 30-10 34H76" />
              <path d="M56 799h26v28H56zM92 799h26v28H92zM128 799h26v28h-26zM56 839h72v60H56z" />
              <rect x="133" y="937" width="33" height="33" rx="12" fill="#4a4f57" /><path d="M140 953h18" />
            </g>
            <path stroke="#6b6f72" stroke-width="2" d="M48 292h120M48 778h120" />
            <g fill="#3a3f47"><path d="M97 256h26l-13 14zM97 571h26l-13 14zM97 741h26l-13 14zM76 851v36l32-18zM54 438h20l-20 21zM126 438h-20l20 21zM54 510h20l-20-21zM66 682l20-16v32z" /></g>
          </svg>
        </div>

        <div class="command">
          <div class="grip">
            <i class="dots"></i>
            <button aria-label="Close"><svg viewBox="0 0 24 24"><path stroke="#c4c6ca" stroke-width="3" d="M6 6l12 12M18 6L6 18" /></svg></button>
            <button aria-label="Customize"><svg viewBox="0 0 24 24"><path stroke="#c4c6ca" stroke-width="4" stroke-linecap="round" d="M3 21L15 9" /><path fill="none" stroke="#c4c6ca" stroke-width="4" d="M17 1a6 6 0 1 0 6 6" /></svg></button>
          </div>
          <div class="console">
<pre>Current layer:  "aux"
Enter an option [?/Make/Set/New/Rename/ON/OFF/Color/Ltype/LWeight/TRansparency/MATerial/Plot/Freeze/Thaw/LOck/Unlock/stAte/
Description/rEconcile/Xref]: _FREEZE
Enter name list of layer(s) to freeze or &lt;select objects&gt;: =dado
Enter an option [?/Make/Set/New/Rename/ON/OFF/Color/Ltype/LWeight/TRansparency/MATerial/Plot/Freeze/Thaw/LOck/Unlock/stAte/
Description/rEconcile/Xref]:</pre>
            <div class="prompt">
              <svg width="24" height="18" viewBox="0 0 24 18"><path fill="none" stroke="#55575a" stroke-width="1.500" d="M1 1h22v16H1z" /><path fill="#55575a" d="M1 0h22v5H1z" /><path fill="none" stroke="#55575a" stroke-width="1.500" d="M3 7l4 3-4 3M8 13h5" /></svg>
              <i class="drop dark"></i>
              <input type="text" placeholder="Type a command" aria-label="Command" />
              <svg width="10" height="6" viewBox="0 0 10 6"><path fill="#4a4c50" d="M5 0l5 6H0z" /></svg>
            </div>
          </div>
        </div>
      </section>
    </main>

    <footer class="status">
      <nav class="layouts">
        <a class="active" href="#">Model</a>
        <a class="a3" href="#">a3</a>
        <i class="slash"></i>
        <button class="plus" aria-label="New layout"><svg viewBox="0 0 18 18"><path stroke="#d8d9db" stroke-width="3" d="M9 0v18M0 9h18" /></svg></button>
        <i class="slash"></i>
      </nav>
      <div class="toggles">
        <div class="set"><button class="model">MODEL</button></div>
        <div class="set">
          <button aria-label="Grid"><svg viewBox="0 0 24 24"><path stroke="#d8d9db" stroke-width="1.500" d="M0 6h24M0 12h24M0 18h24M6 0v24M12 0v24M18 0v24" /></svg></button>
          <button aria-label="Snap"><svg viewBox="0 0 24 24"><path stroke="#d8d9db" stroke-width="3" stroke-dasharray="3 4" d="M3 4.500h18M3 11.500h18M3 18.500h18" /></svg></button>
          <i class="drop"></i>
        </div>
        <div class="set"><button aria-label="Dynamic input"><svg viewBox="0 0 24 24"><path stroke="#d8d9db" stroke-width="1.500" d="M0 8h11M5.500 2v12" /><path fill="#d8d9db" d="M9 14h15v7H9z" /></svg></button></div>
        <div class="set">
          <button aria-label="Ortho"><svg viewBox="0 0 24 24"><path fill="none" stroke="#d8d9db" stroke-width="1.500" d="M1 0v23h23M1 15h7v8" /></svg></button>
          <button aria-label="Polar"><svg viewBox="0 0 24 24"><path fill="none" stroke="#d8d9db" stroke-width="1.500" d="M17 5a9 9 0 1 0 3 9M10 13h14M10 13L20 1" /></svg></button>
          <i class="drop"></i>
          <button aria-label="Isometric"><svg viewBox="0 0 24 24"><path stroke="#e85858" stroke-width="1.500" d="M3 1l18 21" /><path stroke="#58cc80" stroke-width="1.500" d="M12 0v24" /><path fill="#222" stroke="#d8d9db" d="M10 10h4v4h-4z" /></svg></button>
          <i class="drop"></i>
        </div>
        <div class="set">
          <button class="lit" aria-label="Object tracking"><svg viewBox="0 0 24 24"><path fill="none" stroke="#fff" stroke-width="1.500" d="M18 3L2 21h22" /><path fill="#fff" d="M8 10h4v4H8z" /></svg></button>
          <button class="lit" aria-label="Object snap"><svg viewBox="0 0 24 24"><path fill="none" stroke="#fff" stroke-width="1.500" d="M9 4h14v19H4V9" /><path fill="none" stroke="#fff" stroke-width="1.500" d="M1 1h6v6H1z" /></svg></button>
          <i class="drop"></i>
        </div>
        <div class="set">
          <button class="lit" aria-label="Annotation visibility"><svg viewBox="0 0 24 24"><use href="#compass" x="-2" /><circle cx="20" cy="6" r="3.500" fill="none" stroke="#fff" stroke-width="1.500" /></svg></button>
          <button aria-label="Autoscale"><svg viewBox="0 0 24 24"><use href="#compass" x="-2" /><path fill="#d8d9db" stroke="#3b4453" d="M21 0l-5 7h3l-2 6 6-8h-3z" /></svg></button>
          <button aria-label="Annotation scale"><svg viewBox="0 0 24 24"><use href="#compass" /></svg></button>
          <button class="scale">1:1</button>
          <i class="drop"></i>
        </div>
        <div class="set">
          <button aria-label="Workspace"><svg viewBox="0 0 24 24"><circle cx="12" cy="12" r="6.500" fill="none" stroke="#d8d9db" stroke-width="5" /><path stroke="#d8d9db" stroke-width="5" d="M12 0v4M12 20v4M0 12h4M20 12h4M3.500 3.500l3 3M17.500 17.500l3 3M3.500 20.500l3-3M17.500 6.500l3-3" /></svg></button>
          <i class="drop"></i>
        </div>
        <div class="set"><button aria-label="Monitor"><svg viewBox="0 0 24 24"><path stroke="#d8d9db" stroke-width="3" d="M12 0v24M0 12h24" /></svg></button></div>
        <div class="set"><button aria-label="Isolate"><svg viewBox="0 0 24 24"><path fill="none" stroke="#d8d9db" stroke-width="1.500" d="M1 1h9v9H1zM10 16l5 8H5z" /><circle cx="19" cy="10" r="5" fill="none" stroke="#d8d9db" stroke-width="1.500" /></svg></button></div>
        <div class="set sliver"></div>
        <div class="set">
          <button aria-label="Clean screen"><svg viewBox="0 0 24 24"><path fill="none" stroke="#d8d9db" stroke-width="1.500" d="M1 4h22v16H1zM15 11l5-5M4 18l5-5" /><path fill="#d8d9db" d="M16 6h5v5zM3 13v5h5z" /></svg></button>
          <button aria-label="Customization"><svg viewBox="0 0 24 24"><path stroke="#d8d9db" stroke-width="3" d="M0 3h24M0 12h24M0 21h24" /></svg></button>
        </div>
      </div>
    </footer>
  </body>
</html>
```

FILE: styles.css
```css
* {
  box-sizing: border-box;
}
body {
  margin: 0;
  height: 100vh;
  display: flex;
  flex-direction: column;
  overflow: hidden;
  border: 1px solid #0696d7;
  background: #222933;
  color: #f0f0f0;
  font-family: "Open Sans", "Noto Sans", sans-serif;
  font-size: 16px;
}
.sprite {
  position: absolute;
  width: 0;
  height: 0;
}
svg {
  display: block;
  flex: none;
}
a {
  color: inherit;
  text-decoration: none;
}
button,
input,
select {
  font: inherit;
  color: inherit;
  background: none;
  border: 0;
  padding: 0;
  margin: 0;
}
.ico {
  width: 24px;
  height: 24px;
}
.caret {
  flex: none;
  border: 4px solid transparent;
  border-top: 5px solid #d8d9db;
  border-bottom: 0;
}
.drop {
  flex: none;
  display: inline-block;
  border: 6px solid transparent;
  border-top: 7px solid #d8d9db;
  border-bottom: 0;
}
.dim .caret {
  border-top-color: #8a8e95;
}

/* Title bar */
.titlebar {
  flex: none;
  display: flex;
  align-items: center;
  height: 45px;
  padding: 0 10px 4px 3px;
  font-size: 17px;
}
.quick,
.account {
  display: flex;
  align-items: center;
  gap: 12px;
}
.logo {
  width: 60px;
  height: 28px;
  margin-right: 3px;
}
.logo-a {
  font: bold 18px "Open Sans", sans-serif;
  fill: #fff;
}
.logo-cad {
  font: bold 11px "Open Sans", sans-serif;
  fill: #fff;
}
.split {
  display: flex;
  align-items: center;
  gap: 10px;
}
.share {
  display: flex;
  align-items: center;
  gap: 7px;
  color: #8accff;
}
.doc-title {
  flex: 1;
  display: flex;
  justify-content: center;
  gap: 20px;
  white-space: nowrap;
}
.search {
  width: 266px;
  height: 30px;
  padding: 0 4px;
  background: #464f61;
  font-size: 16px;
}
.search::placeholder {
  color: #a9adb4;
  font-style: italic;
}
.user {
  display: flex;
  align-items: center;
  margin-right: 6px;
}
.user span {
  margin-left: 7px;
}
.bar {
  width: 2px;
  height: 26px;
  background: #464f61;
}
.help {
  font: 17px "Open Sans", sans-serif;
  fill: #444a54;
}
.win {
  display: flex;
  gap: 18px;
  margin-left: 90px;
}
.win svg {
  width: 20px;
  height: 20px;
}

/* Ribbon tabs */
.tabs {
  flex: none;
  display: flex;
  align-items: center;
  height: 30px;
  padding-left: 11px;
  font-size: 17px;
  color: #b4b6ba;
}
.tabs a {
  line-height: 30px;
  padding: 0 14px 0 15px;
}
.tabs .active {
  background: #3b4453;
  color: #f0f0f0;
}
.collapse {
  margin: 0 5px 0 32px;
}
.collapse svg {
  width: 24px;
  height: 12px;
}

/* Ribbon */
.ribbon {
  flex: none;
  display: flex;
  height: 148px;
  margin: 0 3px 0 5px;
  background: #3b4453;
}
.panel {
  flex: none;
  display: flex;
  flex-direction: column;
  position: relative;
}
.panel::after {
  content: "";
  position: absolute;
  top: 2px;
  bottom: 2px;
  right: 0;
  width: 2px;
  background: #222933;
}
.panel h2 {
  display: flex;
  justify-content: center;
  align-items: center;
  gap: 8px;
  height: 26px;
  margin: 0 2px 0 0;
  font-size: 16px;
  font-weight: normal;
}
.panel h2 span {
  flex: 1;
  display: flex;
  justify-content: center;
  align-items: center;
  gap: 8px;
}
.launch {
  width: 8px;
  height: 8px;
  margin: 0 8px;
}
.tools {
  flex: 1;
  display: grid;
  align-items: start;
}
.big {
  display: flex;
  flex-direction: column;
  align-items: center;
  padding-top: 12px;
  line-height: 25px;
  text-align: center;
  white-space: nowrap;
}
.big svg {
  width: 48px;
  height: 48px;
  margin-bottom: 7px;
}
.big .caret {
  margin-top: 3px;
}
.on {
  background: #465a73;
  box-shadow: inset 0 0 0 2px #76c5fb;
}
.rows {
  padding-top: 7px;
}
.row {
  display: flex;
  align-items: center;
  gap: 8px;
  height: 36px;
  white-space: nowrap;
}
.row svg {
  width: 24px;
  height: 24px;
}
.row .caret {
  margin: 0 2px;
}
.draw {
  width: 332px;
}
.draw .tools {
  grid-template-columns: 60px 66px 76px 58px auto;
  justify-content: start;
  padding-left: 4px;
}
.draw .rows {
  padding-left: 9px;
}
.modify {
  width: 374px;
}
.modify .tools {
  grid-template-columns: 106px 103px 113px auto;
  justify-content: start;
  padding-left: 11px;
}
.spread .row {
  width: 93px;
}
.spread .caret {
  margin-left: auto;
}
.annotation {
  width: 282px;
}
.annotation .tools {
  grid-template-columns: 52px 96px auto;
  justify-content: start;
  gap: 6px;
  padding-left: 8px;
}
.layers {
  width: 410px;
}
.layers .tools {
  grid-template-columns: 90px 312px;
  gap: 1px;
  padding-left: 2px;
}
.layers .big {
  height: 108px;
  margin-top: 6px;
  padding-top: 6px;
}
.combo {
  display: flex;
  align-items: center;
  height: 34px;
  padding: 0 3px 0 8px;
  border: 2px solid #2a303c;
  background: #4e5b70;
}
.combo select {
  flex: 1;
  appearance: none;
  margin-left: 6px;
}
.layer-box {
  position: relative;
  padding-top: 8px;
}
.li {
  width: 24px;
  height: 24px;
  margin-right: 4px;
}
.swatch {
  flex: none;
  width: 22px;
  height: 22px;
  border: 2px solid #d8d9db;
}
.layer-box .swatch {
  margin: 0 2px;
}
.layer-box .combo {
  padding: 0 1px 0 4px;
}
.red {
  background: #f00;
}
.white {
  background: #fff;
}
.amber {
  background: #ffbf00;
}
.pink {
  background: #ff00bf;
}
.wide {
  width: 24px;
  height: 24px;
}
.layer-list {
  position: absolute;
  z-index: 2;
  top: 42px;
  left: 0;
  right: 0;
  margin: 0;
  padding: 2px 2px 1px 4px;
  list-style: none;
  background: #4e5b70;
  border: 1px solid #1b1f27;
  border-width: 1px 2px;
  box-shadow: 4px 4px 4px rgba(0, 0, 0, 0.4);
}
.layer-list li {
  display: flex;
  align-items: center;
  height: 36px;
  padding-left: 6px;
}
.layer-list span {
  margin-left: 6px;
}
.layer-list .current {
  background: #2d3543;
}
.layer-list .plain {
  background: #3b4453;
}
.block {
  width: 242px;
}
.block .tools {
  grid-template-columns: 56px auto;
  justify-content: start;
  gap: 7px;
  padding-left: 4px;
}
.properties {
  width: 398px;
}
.properties .tools {
  grid-template-columns: 90px 1fr;
  padding: 0 5px 0 4px;
}
.props {
  display: grid;
  grid-template-columns: 24px 1fr;
  gap: 2px 4px;
  align-items: center;
  padding: 8px 0 0 2px;
}
.pi {
  width: 24px;
  height: 24px;
}
.stroke {
  width: 96px;
  height: 2px;
  background: #f0f0f0;
}
.stroke + select {
  margin-left: 3px;
}
.groups {
  width: 104px;
}
.groups .tools {
  grid-template-columns: 59px 35px;
  padding-left: 4px;
}
.groups .row {
  width: 35px;
  justify-content: center;
}
.utilities {
  width: 146px;
}
.utilities .tools {
  grid-template-columns: 78px auto;
  justify-content: start;
  gap: 19px;
  padding-left: 14px;
}
.clipboard {
  width: 136px;
}
.clipboard .tools {
  grid-template-columns: 60px auto;
  justify-content: start;
  gap: 14px;
  padding-left: 10px;
}
.clipboard .row {
  gap: 4px;
}
.view {
  flex: 1;
}
.view::after {
  display: none;
}
.view .tools {
  grid-template-columns: 66px;
  padding-left: 14px;
}
.view h2 {
  justify-content: flex-start;
  padding-left: 8px;
}

/* Drawing tabs */
.files {
  flex: none;
  display: flex;
  align-items: center;
  height: 41px;
  padding: 5px 0 0 22px;
}
.slash {
  width: 2px;
  height: 24px;
  background: #4a5364;
  transform: skewX(-22deg);
}
.start {
  margin: 0 11px 0 18px;
}
.file {
  display: flex;
  align-items: center;
  gap: 15px;
  height: 36px;
  padding: 0 18px 0 25px;
  font-weight: bold;
  background: #3b4453;
  clip-path: polygon(14px 0, 100% 0, calc(100% - 14px) 100%, 0 100%);
}
.plus {
  margin: 0 20px 0 12px;
}
.plus svg {
  width: 18px;
  height: 18px;
}

/* Work area */
.work {
  flex: 1;
  min-height: 0;
  display: flex;
  padding: 0 2px 0 3px;
}
.dock {
  flex: none;
  display: flex;
  width: 38px;
  padding: 4px 4px 4px 1px;
  border: solid #3b4453;
  border-width: 9px 0;
}
.palette {
  flex: 1;
  display: flex;
  align-items: center;
  justify-content: center;
  background: #3b4453;
  font-size: 17px;
}
.palette span {
  writing-mode: vertical-rl;
  transform: rotate(180deg);
}
.viewport {
  flex: 1;
  display: flex;
  flex-direction: column;
  position: relative;
  border: solid #3b4453;
  border-width: 6px 0;
  background: #212830;
}
.scene {
  position: absolute;
  inset: 0;
  width: 100%;
  height: 100%;
}
.axis {
  font: 25px Lato, sans-serif;
  font-weight: 300;
}
.vp-head {
  display: flex;
  justify-content: space-between;
  align-items: center;
  position: relative;
  height: 36px;
  padding: 0 13px 0 4px;
  font-size: 17px;
}
.vp-win {
  display: flex;
  gap: 14px;
  padding-top: 4px;
}
.vp-win svg {
  width: 16px;
  height: 16px;
}
.nav-tools {
  flex: 1;
  display: flex;
  flex-direction: column;
  align-items: flex-end;
  position: relative;
  padding: 66px 4px 0 0;
}
.cube {
  width: 200px;
  height: 150px;
  margin-right: 20px;
}
.dir {
  font: bold 52px "Liberation Sans", sans-serif;
  fill: #b0b2b4;
}
.face {
  font: bold 60px "Open Sans", sans-serif;
  fill: #50555b;
}
.top {
  font-size: 36px;
}
.wcs {
  display: flex;
  align-items: center;
  justify-content: center;
  gap: 8px;
  width: 69px;
  height: 26px;
  margin: 34px 85px 33px 0;
  border: 2px solid #7b7d89;
  border-radius: 5px;
  background: #9799a5;
  color: #5e6069;
  font: 16px "Liberation Sans", sans-serif;
}
.navbar {
  width: 47px;
  height: 312px;
}

/* Command line */
.command {
  display: flex;
  align-self: center;
  position: relative;
  width: 57.7%;
  margin-right: 5px;
}
.grip {
  flex: none;
  display: flex;
  flex-direction: column;
  align-items: center;
  gap: 13px;
  width: 37px;
  padding-top: 7px;
  border-radius: 6px 0 0 6px;
  background: #2b303d;
}
.grip svg {
  width: 24px;
  height: 24px;
}
.dots {
  width: 27px;
  border-top: 2px dotted #c4c6ca;
}
.console {
  flex: 1;
  border: 1px solid #6e7074;
  background: #97989a;
  color: #0c0c0e;
  font-family: "DejaVu Sans Mono", monospace;
  font-size: 18px;
}
.console pre {
  margin: 0;
  padding: 14px 3px 3px;
  font: inherit;
  line-height: 23px;
}
.prompt {
  display: flex;
  align-items: center;
  gap: 4px;
  height: 30px;
  padding: 0 3px 0 6px;
  border-top: 1px solid #2b303d;
  background: #bcbdbf;
}
.prompt input {
  flex: 1;
  padding-left: 5px;
}
.prompt input::placeholder {
  color: #66686c;
  font-style: italic;
}
.dark {
  border-top-color: #4a4c50;
}

/* Status bar */
.status {
  flex: none;
  display: flex;
  justify-content: space-between;
  height: 47px;
  padding: 0 5px 0 16px;
}
.layouts {
  display: flex;
  align-items: center;
  height: 36px;
}
.layouts .active {
  width: 106px;
  line-height: 36px;
  text-align: center;
  font-weight: bold;
  background: #3b4453;
  clip-path: polygon(16px 0, 100% 0, calc(100% - 16px) 100%, 0 100%);
}
.layouts .plus {
  margin: 0 22px 0 20px;
}
.a3 {
  margin: 0 18px 0 10px;
}
.toggles {
  display: flex;
  gap: 4px;
  padding-top: 4px;
}
.set {
  display: flex;
  align-items: center;
  height: 36px;
  background: #3b4453;
}
.set button {
  width: 36px;
  height: 36px;
  display: flex;
  align-items: center;
  justify-content: center;
}
.set .drop {
  margin: 0 6px;
}
.set svg {
  width: 24px;
  height: 24px;
  color: #d8d9db;
}
.set .model {
  width: 72px;
  font-weight: 600;
}
.set .scale {
  width: 28px;
}
.set .lit {
  background: #608fc2;
  border: 1px solid #3b4453;
}
.set .lit svg {
  color: #fff;
}
.sliver {
  width: 4px;
}
```
